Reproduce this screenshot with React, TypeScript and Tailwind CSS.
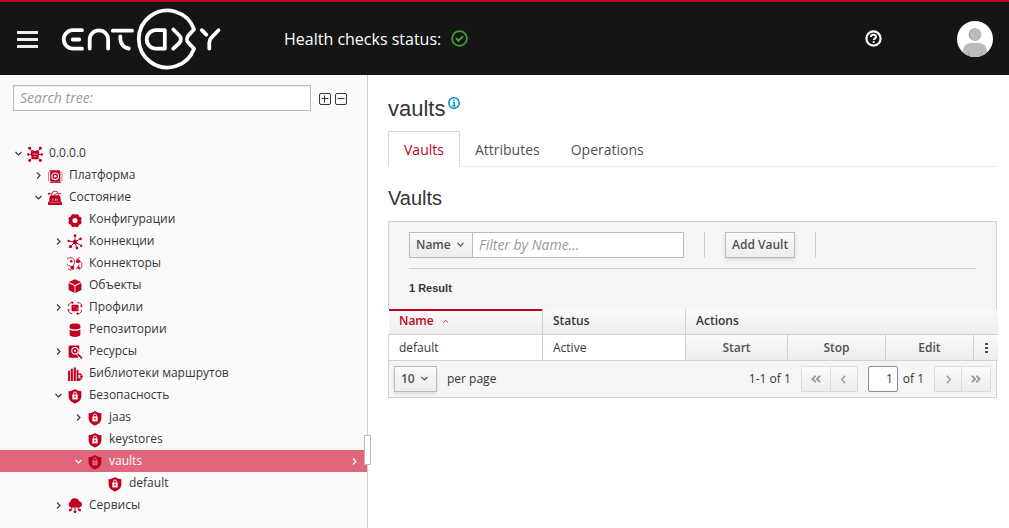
import { useState, type ReactNode } from "react";
import clsx from "clsx";
import { FaAngleDoubleLeft, FaAngleDoubleRight } from "react-icons/fa";

type IconName =
  | "node"
  | "platform"
  | "state"
  | "config"
  | "connections"
  | "connectors"
  | "objects"
  | "profiles"
  | "repository"
  | "resources"
  | "library"
  | "shield"
  | "services";

type TreeItem = {
  id: string;
  label: string;
  level: number;
  icon: IconName;
  state?: "open" | "closed";
};

const treeItems: TreeItem[] = [
  { id: "root", label: "0.0.0.0", level: 0, icon: "node", state: "open" },
  { id: "platform", label: "Платформа", level: 1, icon: "platform", state: "closed" },
  { id: "state", label: "Состояние", level: 1, icon: "state", state: "open" },
  { id: "config", label: "Конфигурации", level: 2, icon: "config" },
  { id: "connections", label: "Коннекции", level: 2, icon: "connections", state: "closed" },
  { id: "connectors", label: "Коннекторы", level: 2, icon: "connectors" },
  { id: "objects", label: "Объекты", level: 2, icon: "objects" },
  { id: "profiles", label: "Профили", level: 2, icon: "profiles", state: "closed" },
  { id: "repositories", label: "Репозитории", level: 2, icon: "repository" },
  { id: "resources", label: "Ресурсы", level: 2, icon: "resources", state: "closed" },
  { id: "libraries", label: "Библиотеки маршрутов", level: 2, icon: "library" },
  { id: "security", label: "Безопасность", level: 2, icon: "shield", state: "open" },
  { id: "jaas", label: "jaas", level: 3, icon: "shield", state: "closed" },
  { id: "keystores", label: "keystores", level: 3, icon: "shield" },
  { id: "vaults", label: "vaults", level: 3, icon: "shield", state: "open" },
  { id: "default", label: "default", level: 4, icon: "shield" },
  { id: "services", label: "Сервисы", level: 2, icon: "services", state: "closed" },
];

const levelPadding = ["pl-3", "pl-8", "pl-[52px]", "pl-[72px]", "pl-[92px]"];

const iconShapes: Record<IconName, ReactNode> = {
  node: (
    <>
      <path d="M2.500 2.200l2 2.800M12.500 2.200l-2 2.800M1 8h3M14 8h-3M2.500 13.500l2.500-3M12.500 13.500l-2.500-3" stroke="currentColor" strokeWidth=".9" />
      <path d="M3.500 6.300c0-2 1.500-2.300 2-2.300l2 1 2-1c.5 0 2 .3 2 2.300l-.7 4.200c-.3 1.500-1 2-1.800 2H6c-.8 0-1.500-.5-1.800-2z" />
      <path d="M5 7.500h5M6.300 10h2.400" stroke="#fff" strokeWidth=".8" strokeOpacity=".7" />
      <circle cx="2.500" cy="2" r="1.400" />
      <circle cx="12.500" cy="2" r="1.400" />
      <circle cx="1.200" cy="8" r="1.200" />
      <circle cx="13.800" cy="8" r="1.200" />
      <circle cx="2.500" cy="13.500" r="1.400" />
      <circle cx="12.500" cy="13.500" r="1.400" />
    </>
  ),
  platform: (
    <>
      <rect x="3" y="2.500" width="9.500" height="10.500" rx="1" />
      <path d="M2 2.500h10M3 13.500h10" stroke="currentColor" strokeOpacity=".8" />
      <path d="M1.500 3.500v9M14 3.500v9" stroke="currentColor" strokeWidth=".8" strokeOpacity=".6" />
      <circle cx="7.700" cy="7.800" r="3.100" fill="none" stroke="#fff" strokeWidth="1" />
      <circle cx="7.700" cy="7.800" r="1.200" fill="#fff" />
    </>
  ),
  state: (
    <>
      <path d="M1.500 3.500h2.700M10.500 3.500h3" stroke="currentColor" strokeWidth=".8" />
      <path d="M4.500 5.500V4a3 3 0 0 1 6 0v1.500M6.500 3.500l1 1 2-2" fill="none" stroke="currentColor" strokeWidth=".8" />
      <circle cx="1.800" cy="3.500" r=".9" />
      <path d="M4.500 5h6c1.500 0 2 1 2.200 2.300L13 11h1v3H1v-3h1l.3-3.700C2.500 6 3 5 4.500 5z" />
      <path d="M5.500 8v2M8 8v2M9.500 8v2" stroke="#fff" strokeWidth=".9" strokeOpacity=".7" />
      <path d="M2.500 11.500h10" stroke="#fff" strokeWidth=".5" strokeOpacity=".6" />
    </>
  ),
  config: (
    <path
      fillRule="evenodd"
      d="M5.800 1.800l1.700.7 1.700-.7 1.500.7.7 1.700 1.700.7.7 1.500-.7 1.600.7 1.700-.7 1.500-1.700.7-.7 1.700-1.500.7-1.700-.7-1.700.7-1.500-.7-.7-1.700-1.700-.7-.7-1.500.7-1.700-.7-1.600.7-1.500 1.700-.7.7-1.700zM7.500 5.600a2.400 2.400 0 1 0 0 4.800 2.400 2.400 0 0 0 0-4.800z"
    />
  ),
  connections: (
    <>
      <path d="M7.500 7.500V1.500M7.500 7.500l5-3M7.500 7.500l5.500 3.300M7.500 7.500l1.500 5.500M7.500 7.500l-4 4M7.500 7.500l-6-1" stroke="currentColor" strokeWidth=".9" />
      <circle cx="7.500" cy="7.500" r="2.100" />
      <circle cx="7.500" cy="1.500" r="1.200" />
      <circle cx="12.700" cy="4.500" r="1.300" />
      <circle cx="13.300" cy="11" r="1.100" />
      <circle cx="9.300" cy="13.200" r="1.300" />
      <circle cx="3.200" cy="11.800" r="1.600" />
      <circle cx="1.500" cy="6.500" r="1.100" />
    </>
  ),
  connectors: (
    <>
      <path d="M3.500 9.500a4 4 0 1 1 3.500-3L5.500 10M8.500 12.500l3-4.500M11.500 4.500c3 1 3.500 6 0 8.500M9 3l3-1.500M1 12l3 1.500" fill="none" stroke="currentColor" strokeWidth=".8" />
      <circle cx="4" cy="5" r="1.200" />
      <circle cx="10.300" cy="5" r="1.900" />
      <circle cx="5" cy="11" r="1.800" />
      <circle cx="11" cy="11" r="1.200" />
    </>
  ),
  objects: <path d="M7.500 1.200l5.800 2.600-5.800 2.700-5.800-2.700zM1.500 4.800l5.600 2.600V14l-5.600-2.800zM13.500 4.800L7.900 7.400V14l5.600-2.800z" />,
  profiles: (
    <>
      <rect x="4.200" y="4.500" width="6.600" height="6" rx=".8" />
      <path d="M6 6.500h1M9.500 9v-1.500" stroke="#fff" strokeWidth=".7" strokeOpacity=".7" />
      <path d="M1.500 5.800V4.500l2-2H5M9.500 2.500h2l2 2V6M1.500 9.300v1.500l2 2H5M9.500 12.800h2l2-2V9.300" fill="none" stroke="currentColor" strokeWidth=".9" />
      <path d="M4.500 1l2 1.500-2 1.500zM15 5.500L13.500 7 12 5.500zM10.500 11.300v3l-2-1.500zM0 9.700l1.500-1.500L3 9.700z" />
    </>
  ),
  repository: (
    <path d="M2.500 3.200C2.500.9 12.500.9 12.500 3.200v2.300c0 2-10 2-10 0zM2.500 7c2 1.600 8 1.600 10 0v5c0 2.600-10 2.600-10 0z" />
  ),
  resources: (
    <>
      <path d="M3 1.500h8.500v5l-1 6.500H3A1.500 1.500 0 0 1 1.500 11.500V3C1.500 2 2 1.500 3 1.500z" />
      <circle cx="7.500" cy="6.300" r="3" fill="#c00021" stroke="#fff" strokeWidth="1" />
      <circle cx="7.500" cy="6.300" r="1" fill="#fff" />
      <path d="M9.700 8.800l4 4.400" stroke="#fff" strokeWidth="3" />
      <path d="M10 9.300l4 4.200" stroke="currentColor" strokeWidth="1.600" />
    </>
  ),
  library: (
    <>
      <path d="M1 4.500h1.800V14H1zM3.500 2.500h2V14h-2zM6.300 1.300h2V14h-2zM9 3.500h1.700V14H9z" />
      <path d="M10.500 7.500h1.500a1.500 1.500 0 0 1 1.500 1.500M10.500 12.500h1.500a1.500 1.500 0 0 0 1.500-1.500" fill="none" stroke="currentColor" strokeWidth="1.200" />
      <circle cx="13.500" cy="10" r="1.300" />
      <circle cx="11.500" cy="12.800" r="1.200" />
    </>
  ),
  shield: (
    <>
      <path d="M7.500 1c1.800 1.300 3.700 1.800 6 2v4.500c0 3.500-2.500 5.800-6 7-3.500-1.200-6-3.500-6-7V3c2.300-.2 4.200-.7 6-2z" />
      <path d="M6.100 6V5.200a1.400 1.400 0 0 1 2.800 0V6" fill="none" stroke="#fff" strokeWidth=".9" />
      <path d="M5 6h5v4.700H5z" fill="#fff" />
      <path d="M7.500 7.300v1.900" stroke="currentColor" strokeWidth="1.200" />
    </>
  ),
  services: (
    <>
      <path d="M3.800 8.800A2.800 2.800 0 0 1 3 3.600a4.500 4.500 0 0 1 8.500-.6 3 3 0 0 1 .5 5.800z" />
      <path d="M7.500 8.500v4M4.500 8.500V11H3M10.500 8.500V11H12" fill="none" stroke="currentColor" strokeWidth=".9" />
      <circle cx="7.500" cy="13" r="1.300" />
      <circle cx="3" cy="11.300" r="1.300" />
      <circle cx="12" cy="11.300" r="1.300" />
    </>
  ),
};

function Angle({ direction, className }: { direction: "down" | "right" | "left" | "up"; className?: string }) {
  const paths = {
    down: "M1.500 3l3 3 3-3",
    up: "M1.500 6l3-3 3 3",
    right: "M3 1.500l3 3-3 3",
    left: "M6 1.500l-3 3 3 3",
  };
  return (
    <svg viewBox="0 0 9 9" className={clsx("shrink-0", className)} fill="none" stroke="currentColor" strokeWidth="1.100" aria-hidden="true">
      <path d={paths[direction]} />
    </svg>
  );
}

function Logo() {
  return (
    <svg viewBox="60 8 162 62" className="h-[62px] w-[162px] shrink-0" fill="none" stroke="#fff" strokeWidth="3.800" strokeLinecap="round" strokeLinejoin="round" role="img" aria-label="Entaxy">
      <path d="M82 30.200H73a9.250 9.250 0 0 0 0 18.500h9M72.700 39.500h6.600" />
      <path d="M89.700 48.500v-9a9.200 9.200 0 0 1 18.400 0v9" />
      <path d="M112.700 30.700H132M120.300 36.500v2c0 5 3.500 9.500 8.500 10" />
      <path d="M194.100 29.300a28.500 28.500 0 1 0 0 19.400l-5.600-5.800c-2-2-2-5.400 0-7.500z" />
      <path d="M164.800 30.200v18.500H156a9.250 9.250 0 0 1 0-18.500z" />
      <path d="M173.300 29.500l6 6c2 2 2 5.500 0 7.500l-6 5.700" />
      <path d="M201.800 30.200l4.500 4.500M218.500 30.200l-7.200 7.500c-1.500 1.500-2 3-2 5v5.800" />
    </svg>
  );
}

function Avatar() {
  return (
    <svg viewBox="0 0 36 36" className="size-9 rounded-full" role="img" aria-label="User">
      <rect width="36" height="36" fill="#fff" />
      <circle cx="18" cy="13.500" r="6.500" fill="#bbb" />
      <path d="M15 8a6.500 6.500 0 0 0 0 11c-3-3-3-8 0-11z" fill="#9e9e9e" />
      <path d="M6 36v-6a8 8 0 0 1 8-8h8a8 8 0 0 1 8 8v6z" fill="#bbb" />
      <path d="M11 30l2 6h-2zM25 30l-2 6h2z" fill="#9e9e9e" />
    </svg>
  );
}

function Header() {
  return (
    <header className="flex h-[75px] shrink-0 items-center border-t-2 border-[#c00021] bg-[#151515] pr-4 pl-[17px] text-white">
      <button type="button" aria-label="Toggle navigation" className="flex w-[21px] flex-col gap-1 pt-px">
        <span className="h-[3px] bg-[#ededed]" />
        <span className="h-[3px] bg-[#ededed]" />
        <span className="h-[3px] bg-[#ededed]" />
      </button>
      <div className="ml-[22px]">
        <Logo />
      </div>
      <p className="ml-[62px] flex items-center gap-[10px] text-base">
        Health checks status:
        <svg viewBox="0 0 17 17" className="size-[17px]" fill="none" stroke="#3f9c35" aria-label="Healthy">
          <circle cx="8.500" cy="8.500" r="7.400" strokeWidth="1.800" />
          <path d="M5 8.200l2.500 2.500 4.500-4.500" strokeWidth="2.200" />
        </svg>
      </p>
      <button type="button" aria-label="Help" className="ml-auto">
        <svg viewBox="0 0 17 17" className="size-[17px]" fill="none" stroke="#fff" aria-hidden="true">
          <circle cx="8.500" cy="8.500" r="7.100" strokeWidth="2.200" />
          <path d="M6 7c.2-3 5-2.700 5 0 0 1.600-2.300 1.500-2.300 3" strokeWidth="2" />
          <path d="M7.700 12h2" strokeWidth="1.800" />
        </svg>
      </button>
      <button type="button" aria-label="Account" className="ml-[75px]">
        <Avatar />
      </button>
    </header>
  );
}

function Sidebar({ selected, onSelect }: { selected: string; onSelect: (id: string) => void }) {
  return (
    <aside className="relative w-[368px] shrink-0 border-r border-[#d1d1d1] bg-[#fafafa]">
      <div className="flex items-center pt-[10px] pl-[13px]">
        <input
          type="text"
          aria-label="Search tree"
          placeholder="Search tree:"
          className="h-[26px] w-[298px] border border-[#bbb] bg-white px-[6px] pb-px text-sm shadow-[inset_0_1px_1px_rgba(3,3,3,0.08)] placeholder:text-[#999] placeholder:italic"
        />
        <div className="ml-2 flex gap-1 pt-[2px]">
          <button type="button" aria-label="Expand all">
            <svg viewBox="0 0 12 12" className="size-3" fill="none" stroke="#363636" aria-hidden="true">
              <rect x=".5" y=".5" width="11" height="11" rx="1.500" />
              <path d="M2.500 5.500h7M5.500 2.500v7" />
            </svg>
          </button>
          <button type="button" aria-label="Collapse all">
            <svg viewBox="0 0 12 12" className="size-3" fill="none" stroke="#363636" aria-hidden="true">
              <rect x=".5" y=".5" width="11" height="11" rx="1.500" />
              <path d="M2.500 5.500h7" />
            </svg>
          </button>
        </div>
      </div>

      <ul role="tree" className="mt-[31px]">
        {treeItems.map((item) => {
          const isSelected = item.id === selected;
          return (
            <li
              key={item.id}
              role="treeitem"
              aria-selected={isSelected}
              aria-expanded={item.state ? item.state === "open" : undefined}
              onClick={() => onSelect(item.id)}
              className={clsx(
                "flex h-[22px] cursor-pointer items-center pr-2",
                levelPadding[item.level],
                isSelected ? "bg-[#e0677b] text-white" : "text-[#363636]",
              )}
            >
              <span className="mr-[3px] flex w-3 justify-center">
                {item.state ? <Angle direction={item.state === "open" ? "down" : "right"} className="size-[9px]" /> : null}
              </span>
              <svg
                viewBox="0 0 15 15"
                className={clsx("mt-px mr-[6px] size-4 shrink-0 text-[#c00021]", isSelected && "[&>path:nth-child(n+2)]:opacity-40")}
                fill="currentColor"
                aria-hidden="true"
              >
                {iconShapes[item.icon]}
              </svg>
              <span>{item.label}</span>
              {isSelected ? <Angle direction="right" className="ml-auto size-[9px]" /> : null}
            </li>
          );
        })}
      </ul>

      <div className="absolute top-[360px] -right-1 h-[30px] w-[7px] border border-[#bbb] bg-white" />
    </aside>
  );
}

const buttonStyle =
  "h-[26px] border border-[#bbb] bg-linear-to-b from-[#fafafa] to-[#ededed] font-semibold text-[#4d5258]";
const pagerStyle =
  "flex h-[26px] items-center justify-center border border-[#dcdcdc] bg-linear-to-b from-[#fafafa] to-[#ededed] text-[#999]";
const actionStyle = "h-[25px] w-full bg-linear-to-b from-[#fafafa] to-[#ededed] font-semibold text-[#4d5258]";

function Toolbar() {
  return (
    <div className="border border-b-0 border-[#d1d1d1] bg-[#f5f5f5] px-5 pt-[10px]">
      <form className="flex items-center border-b border-[#d1d1d1] pb-[10px]" onSubmit={(event) => event.preventDefault()}>
        <div className="relative">
          <select aria-label="Filter field" className={clsx(buttonStyle, "w-16 appearance-none pr-5 pl-[6px]")}>
            <option>Name</option>
          </select>
          <Angle direction="down" className="pointer-events-none absolute top-2 right-2 size-[9px] text-[#4d5258]" />
        </div>
        <input
          type="text"
          aria-label="Filter by Name"
          placeholder="Filter by Name..."
          className="-ml-px h-[26px] w-[212px] border border-[#bbb] bg-white px-[6px] pb-px text-sm placeholder:text-[#999] placeholder:italic"
        />
        <div className="ml-5 flex border-x border-[#d1d1d1] px-5">
          <button type="button" className={clsx(buttonStyle, "px-[6px] shadow-[0_2px_3px_rgba(3,3,3,0.1)]")}>
            Add Vault
          </button>
        </div>
      </form>
      <h5 className="flex h-10 items-center pb-px font-['Liberation_Sans',Arial,sans-serif] text-[11px] font-bold">1 Result</h5>
    </div>
  );
}

function VaultTable() {
  return (
    <table className="w-[calc(100%+1px)] table-fixed border-separate border-spacing-0 text-left">
      <colgroup>
        <col className="w-[155px]" />
        <col className="w-[143px]" />
        <col className="w-[102px]" />
        <col className="w-[98px]" />
        <col className="w-[88px]" />
        <col className="w-6" />
      </colgroup>
      <thead>
        <tr className="h-[26px] bg-linear-to-b from-[#fafafa] to-[#ededed] [&>th]:border-b [&>th]:border-b-[#d1d1d1] [&>th]:p-0 [&>th]:pb-px [&>th]:pl-[10px] [&>th]:font-semibold">
          <th scope="col" aria-sort="ascending" className="border-r border-l border-r-[#d1d1d1] border-l-white text-[#c00021] shadow-[inset_0_2px_0_#c00021]">
            <span className="flex items-center gap-2">
              Name
              <Angle direction="up" className="size-[7px]" />
            </span>
          </th>
          <th scope="col" className="border-r border-r-[#d1d1d1]">
            Status
          </th>
          <th scope="col" colSpan={4}>
            Actions
          </th>
        </tr>
      </thead>
      <tbody>
        <tr className="h-[26px] bg-white [&>td]:border-r [&>td]:border-b [&>td]:border-[#d1d1d1] [&>td]:p-0 [&>td:last-child]:border-r-0">
          <td className="border-l">
            <span className="pl-[10px]">default</span>
          </td>
          <td>
            <span className="pl-[10px]">Active</span>
          </td>
          <td>
            <button type="button" className={clsx(actionStyle, "block")}>
              Start
            </button>
          </td>
          <td>
            <button type="button" className={clsx(actionStyle, "block")}>
              Stop
            </button>
          </td>
          <td>
            <button type="button" className={clsx(actionStyle, "block")}>
              Edit
            </button>
          </td>
          <td>
            <button type="button" aria-label="More actions" className={clsx(actionStyle, "flex items-center justify-center")}>
              <svg viewBox="0 0 3 11" className="h-[11px] w-[3px]" fill="currentColor" aria-hidden="true">
                <path d="M0 1h3v2H0zM0 5h3v2H0zM0 9h3v2H0z" />
              </svg>
            </button>
          </td>
        </tr>
      </tbody>
    </table>
  );
}

function Pagination() {
  return (
    <div className="flex items-center border border-t-0 border-[#d1d1d1] bg-[#f5f5f5] p-[5px]">
      <div className="relative">
        <select id="page-size" className={clsx(buttonStyle, "w-[43px] appearance-none pl-[6px] shadow-[0_2px_3px_rgba(3,3,3,0.1)]")}>
          <option>10</option>
        </select>
        <Angle direction="down" className="pointer-events-none absolute top-2 right-2 size-[9px] text-[#4d5258]" />
      </div>
      <label htmlFor="page-size" className="ml-[10px]">
        per page
      </label>
      <span className="ml-auto">1-1 of 1</span>
      <button type="button" aria-label="First page" className={clsx(pagerStyle, "ml-[10px] w-[30px]")}>
        <FaAngleDoubleLeft className="size-3" />
      </button>
      <button type="button" aria-label="Previous page" className={clsx(pagerStyle, "-ml-px w-7")}>
        <Angle direction="left" className="size-[11px]" />
      </button>
      <input
        type="text"
        aria-label="Current page"
        defaultValue="1"
        className="ml-[10px] h-[26px] w-[30px] rounded-xs border border-[#8b8d9f] bg-white pr-1 pb-px text-right"
      />
      <span className="ml-[5px]">of 1</span>
      <button type="button" aria-label="Next page" className={clsx(pagerStyle, "ml-[10px] w-7")}>
        <Angle direction="right" className="size-[11px]" />
      </button>
      <button type="button" aria-label="Last page" className={clsx(pagerStyle, "-ml-px w-[30px]")}>
        <FaAngleDoubleRight className="size-3" />
      </button>
    </div>
  );
}

export default function App() {
  const [selected, setSelected] = useState("vaults");
  const [tab, setTab] = useState("Vaults");

  return (
    <div className="flex min-h-screen flex-col bg-white font-['Open_Sans',sans-serif] text-xs text-[#363636]">
      <Header />
      <div className="flex flex-1">
        <Sidebar selected={selected} onSelect={setSelected} />
        <main className="min-w-0 flex-1 pt-5 pr-3 pl-5">
          <h1 className="flex h-7 items-center gap-[3px] font-['Liberation_Sans',Arial,sans-serif] text-[22px]">
            vaults
            <button type="button" aria-label="Info" className="self-start">
              <svg viewBox="0 0 12 12" className="mt-[2px] size-3" fill="none" stroke="#0088ce" aria-hidden="true">
                <circle cx="6" cy="6" r="5.200" strokeWidth="1.500" />
                <path d="M6 2.500v1.500M4.700 5.500h1.500v3M4.500 8.700h3" strokeWidth="1.400" />
              </svg>
            </button>
          </h1>
          <div role="tablist" className="mt-2 flex h-9 border-b border-[#ededed] text-sm">
            {["Vaults", "Attributes", "Operations"].map((name) => (
              <button
                key={name}
                type="button"
                role="tab"
                aria-selected={tab === name}
                onClick={() => setTab(name)}
                className={clsx(
                  "h-9 border-t px-[15px]",
                  tab === name ? "border-x border-[#d9d9d9] bg-white text-[#c00021]" : "border-r border-transparent pt-px text-[#4d5258]",
                )}
              >
                {name}
              </button>
            ))}
          </div>
          <h2 className="mt-[17px] mb-[9px] flex h-7 items-center font-['Liberation_Sans',Arial,sans-serif] text-xl">Vaults</h2>
          <Toolbar />
          <VaultTable />
          <Pagination />
        </main>
      </div>
    </div>
  );
}
